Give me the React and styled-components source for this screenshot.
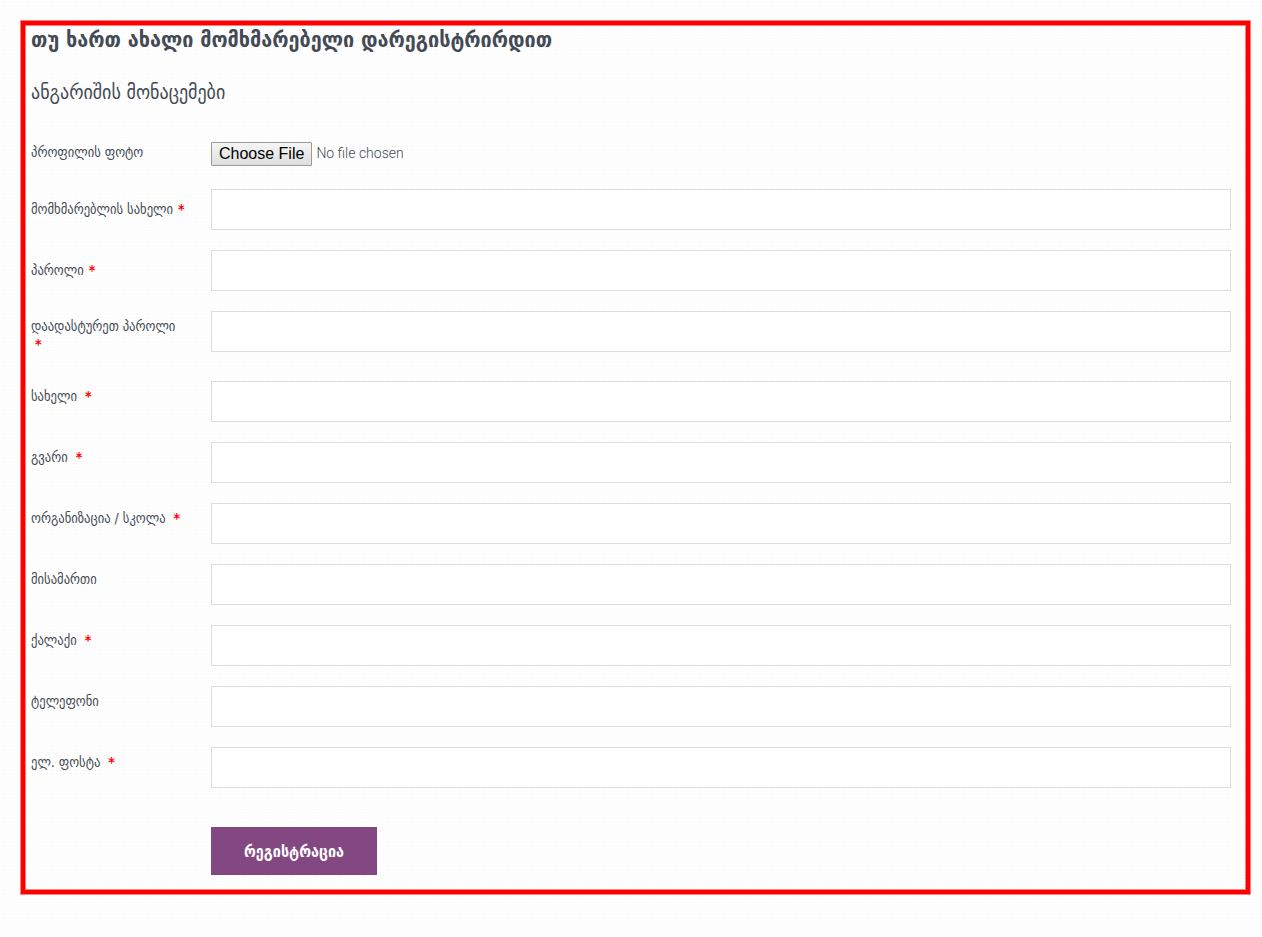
import { useId } from "react";
import styled, { createGlobalStyle } from "styled-components";

const fields = [
    {name: "username", label: "მომხმარებლის სახელი", required: true, centered: true},
    {name: "password", label: "პაროლი", required: true, centered: true, type: "password"},
    {name: "confirm", label: "დაადასტურეთ პაროლი", required: true, spaced: true, type: "password"},
    {name: "firstName", label: "სახელი", required: true, spaced: true},
    {name: "lastName", label: "გვარი", required: true, spaced: true},
    {name: "school", label: "ორგანიზაცია / სკოლა", required: true, spaced: true},
    {name: "address", label: "მისამართი"},
    {name: "city", label: "ქალაქი", required: true, spaced: true},
    {name: "phone", label: "ტელეფონი", type: "tel"},
    {name: "email", label: "ელ. ფოსტა", required: true, spaced: true, type: "email"},
];

function TextField({name, label, type = "text", required, centered, spaced}) {
    const id = useId();

    return (
        <FieldRow $centered={centered}>
            <FieldLabel htmlFor={id}>
                {label}
                {required && <>{" "}<RequiredMark $spaced={spaced}>*</RequiredMark></>}
            </FieldLabel>
            <TextInput id={id} name={name} type={type}/>
        </FieldRow>
    );
}

function App() {
    return (
        <>
            <GlobalStyle/>
            <FormPanel onSubmit={(e) => e.preventDefault()}>
                <Title>თუ ხართ ახალი მომხმარებელი დარეგისტრირდით</Title>
                <Subtitle>ანგარიშის მონაცემები</Subtitle>
                <FieldList>
                    <FieldRow>
                        <FieldLabel htmlFor="photo">პროფილის ფოტო</FieldLabel>
                        <FileInput id="photo" name="photo" type="file"/>
                    </FieldRow>
                    {fields.map((field) => (
                        <TextField key={field.name} {...field}/>
                    ))}
                </FieldList>
                <FormActions>
                    <SubmitButton type="submit">რეგისტრაცია</SubmitButton>
                </FormActions>
            </FormPanel>
        </>
    );
}

const GlobalStyle = createGlobalStyle`
    * {
        box-sizing: border-box;
    }

    body {
        margin: 0;
        color: #434a54;
        font-family: "DejaVu Sans Condensed", "DejaVu Sans", sans-serif;
        background-color: #fff;
        background-image: conic-gradient(from 90deg at 2px 2px, #f6f6f6 25%, transparent 0);
        background-size: 3px 3px;
    }
`;

const FormPanel = styled.form`
    margin: 21px 12px 21px 21px;
    padding: 0 15px 15px 6px;
    border: 4px solid #f00;
    box-shadow: 0 0 0 1px #ff8080, inset 0 0 0 1px #ff8080;
`;

const Title = styled.h1`
    margin: 0;
    font-size: 22px;
    line-height: 30px;
    font-weight: 700;
`;

const Subtitle = styled.h2`
    margin: 24px 0 32px;
    font-size: 20px;
    line-height: 26px;
    font-weight: 400;
`;

const FieldList = styled.div`
    display: flex;
    flex-direction: column;
    gap: 20px;
`;

const FieldRow = styled.div`
    display: grid;
    grid-template-columns: 156px 1fr;
    column-gap: 24px;
    align-items: ${({$centered}) => ($centered ? "center" : "start")};
`;

const FieldLabel = styled.label`
    padding: 6px 0 8px;
    font-size: 14px;
    line-height: 18px;
`;

const RequiredMark = styled.span`
    margin-left: ${({$spaced}) => ($spaced ? "4px" : "1px")};
    color: #f00;
    font-weight: 700;
`;

const TextInput = styled.input`
    width: 100%;
    height: 41px;
    padding: 8px 12px;
    border: 1px solid #dddde0;
    border-radius: 0;
    background: #fff;
    color: inherit;
    font: inherit;
`;

const FileInput = styled.input`
    width: 100%;
    margin-top: 5px;
    color: #434a54;
    font-family: Roboto, sans-serif;
    font-size: 14px;
    font-weight: 300;

    &::file-selector-button {
        height: 24px;
        margin: 0 4px 0 0;
        padding: 0 7px;
        border: 1px solid #999;
        border-radius: 1px;
        background: linear-gradient(#f6f6f6, #dedede);
        color: #000;
        font-family: "Liberation Sans", Arial, sans-serif;
        font-size: 16px;
        font-weight: 400;
        vertical-align: middle;
    }
`;

const FormActions = styled.div`
    padding: 39px 0 0 180px;
`;

const SubmitButton = styled.button`
    height: 48px;
    padding: 0 33px;
    border: 0;
    background: #834882;
    color: #fff;
    font-family: inherit;
    font-size: 16px;
    font-weight: 700;
    cursor: pointer;
`;

export default App
